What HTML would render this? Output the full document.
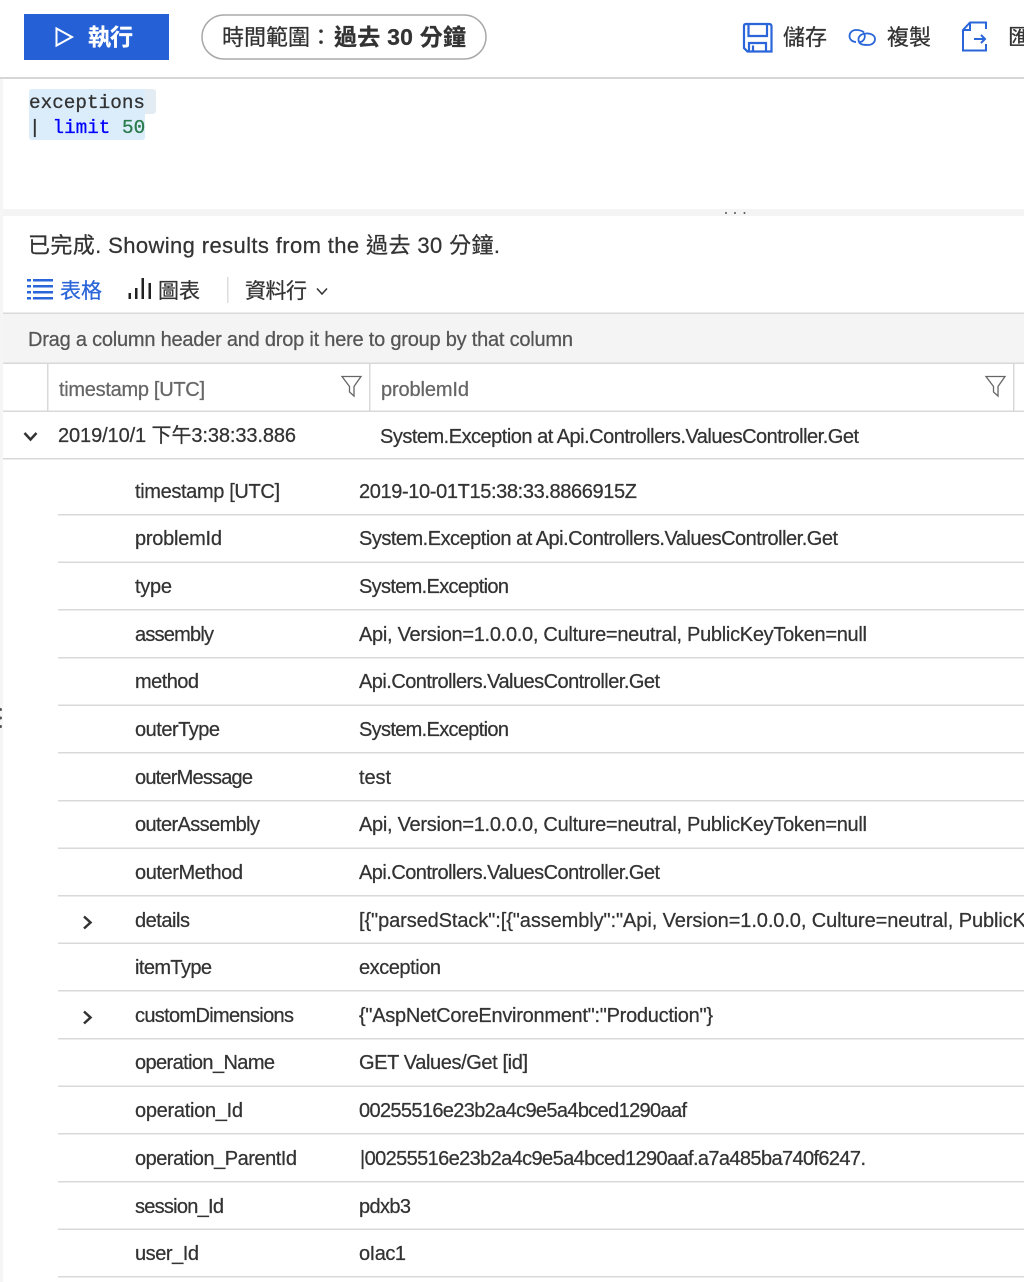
<!DOCTYPE html>
<html><head><meta charset="utf-8"><style>
html,body{margin:0;padding:0;background:#fff;width:1024px;height:1282px;overflow:hidden}
svg{display:block;filter:blur(.3px)}
text{font-family:"Liberation Sans","Noto Sans CJK TC",sans-serif;font-size:20px;fill:#333;stroke:#333;stroke-width:.25px;white-space:pre}
.m{font-family:"Liberation Mono",monospace;font-size:19.3px;stroke-width:.3px}
.l{fill:#d9d9d9}
.big{font-size:22px}
.w{fill:#fff;stroke:#fff;font-size:23px;font-weight:bold}
.bold{font-size:23px;font-weight:bold}
.blue{font-size:21px;fill:#2a66d9;stroke:#2a66d9}
.g5{fill:#555;stroke:#555}
.g6{fill:#666;stroke:#666}
</style></head><body>
<svg width="1024" height="1282" viewBox="0 0 1024 1282" xmlns="http://www.w3.org/2000/svg">
<rect x="0" y="79" width="3" height="1203" fill="#f5f5f5"/>
<!-- top bar -->
<rect x="24" y="14" width="145" height="46" fill="#2660d6"/>
<path d="M56.5 28.5 L72 37 L56.5 45.5 Z" fill="none" stroke="#fff" stroke-width="2"/>
<text class="w" x="88" y="45" textLength="45">執行</text>
<rect x="202" y="15" width="284" height="44" rx="22" fill="#fff" stroke="#aaa" stroke-width="1.5"/>
<text class="big" x="222" y="45" textLength="110">時間範圍：</text>
<text class="bold" x="334" y="45" textLength="132">過去 30 分鐘</text>
<path d="M746 24 H769 Q771.500 24 771.500 26.500 V51.500 H747.500 L744 48 V26 Q744 24 746 24 Z M748.500 24 V36 H767 V24 M749 51.500 V43 H766 V51.500 M753 45.500 V51.500" fill="none" stroke="#2a66d9" stroke-width="2.200"/>
<text class="big" x="783" y="45" textLength="44">儲存</text>
<path d="M864 32.500 C862 30.500 859 30 856 30 C852 30 849.500 33 849.500 36 C849.500 39.500 852.500 42 856 42 M864 33.500 C866 37 864 41.500 860 42 M866 33.500 C871 33 875 35.500 875 39 C875 42.500 872 45 868 45 C864 45 859 45 858.500 40 C858 36 862 33.500 866 33.500" fill="none" stroke="#2a66d9" stroke-width="1.800"/>
<text class="big" x="887" y="45" textLength="44">複製</text>
<path d="M986 29 V22.500 H970 L963 30 V50.500 H986 V44 M970 22.500 V30 H963 M974 39 H985 M981 35 L985 39 L981 43" fill="none" stroke="#2a66d9" stroke-width="2"/>
<text class="big" x="1008" y="45">匯</text>
<rect x="0" y="77" width="1024" height="2" fill="#d6d6d6"/>
<!-- query -->
<path d="M29 92 a3 3 0 0 1 3-3 H153 a3 3 0 0 1 3 3 V111 a3 3 0 0 1-3 3 H29 Z" fill="#e4ecf3"/>
<path d="M29 92 a3 3 0 0 1 3-3 H145 V137 a3 3 0 0 1-3 3 H32 a3 3 0 0 1-3-3 Z" fill="#dbedfb"/>
<text class="m" x="29" y="108" textLength="116">exceptions</text>
<text class="m" x="29" y="133">|</text>
<text class="m" x="52.500" y="133" style="fill:#0000ff;stroke:#0000ff">limit</text>
<text class="m" x="122" y="133" style="fill:#2a7a4b;stroke:#2a7a4b">50</text>
<!-- splitter -->
<rect x="3" y="209" width="1021" height="7" fill="#f4f4f4"/>
<circle cx="726" cy="213" r="1" fill="#555"/><circle cx="735" cy="213" r="1" fill="#555"/><circle cx="744.500" cy="213" r="1" fill="#555"/>
<text class="big" x="28" y="253" textLength="472">已完成. Showing results from the 過去 30 分鐘.</text>
<!-- tabs -->
<g fill="#2a66d9">
<rect x="27" y="279" width="4" height="2.500"/><rect x="33" y="279" width="20" height="2.500"/>
<rect x="27" y="285" width="4" height="2.500"/><rect x="33" y="285" width="20" height="2.500"/>
<rect x="27" y="291" width="4" height="2.500"/><rect x="33" y="291" width="20" height="2.500"/>
<rect x="27" y="297" width="4" height="2.500"/><rect x="33" y="297" width="20" height="2.500"/>
</g>
<text class="blue" x="60" y="298" textLength="42">表格</text>
<g fill="#222">
<rect x="128.500" y="293" width="2.500" height="6"/><rect x="135" y="288" width="2.500" height="11"/><rect x="141.500" y="278" width="2.500" height="21"/><rect x="148.500" y="283" width="2.500" height="16"/>
</g>
<text x="158" y="298" textLength="42" style="font-size:21px">圖表</text>
<rect x="227" y="277" width="1.500" height="26" fill="#ddd"/>
<text x="245" y="298" textLength="62" style="font-size:21px">資料行</text>
<path d="M317 288.500 L322 294 L327 288.500" fill="none" stroke="#333" stroke-width="1.500"/>
<!-- group bar -->
<rect x="3" y="313" width="1021" height="51" fill="#f4f4f4"/>
<rect class="l" x="3" y="312.500" width="1021" height="1.500"/>
<rect class="l" x="3" y="362.500" width="1021" height="1.500"/>
<text class="g5" x="28" y="346" textLength="545">Drag a column header and drop it here to group by that column</text>
<!-- header -->
<rect class="l" x="47" y="364" width="1.500" height="47"/>
<rect class="l" x="369" y="364" width="1.500" height="47"/>
<rect class="l" x="1013" y="364" width="1.500" height="47"/>
<rect class="l" x="3" y="410.500" width="1021" height="1.500"/>
<text class="g6" x="59" y="396" textLength="146">timestamp [UTC]</text>
<text class="g6" x="381" y="396" textLength="88">problemId</text>
<path d="M342 376.500 H361 L354 386.500 V396 L349.500 392 V386.500 Z" fill="none" stroke="#666" stroke-width="1.300"/>
<path d="M986 376.500 H1005 L998 386.500 V396 L993.500 392 V386.500 Z" fill="none" stroke="#666" stroke-width="1.300"/>
<!-- main row -->
<path d="M24.500 433 L30.500 439.500 L36.500 433" fill="none" stroke="#333" stroke-width="2.500"/>
<text x="58" y="442" textLength="238">2019/10/1 下午3:38:33.886</text>
<text x="380" y="443" textLength="479">System.Exception at Api.Controllers.ValuesController.Get</text>
<rect class="l" x="3" y="458" width="1021" height="1.500"/>
<!-- detail rows -->
<g class="rows">
<text x="135" y="498" textLength="145">timestamp [UTC]</text><text x="359" y="498" textLength="278">2019-10-01T15:38:33.8866915Z</text>
<text x="135" y="545" textLength="87">problemId</text><text x="359" y="545" textLength="479">System.Exception at Api.Controllers.ValuesController.Get</text>
<text x="135" y="593" textLength="37">type</text><text x="359" y="593" textLength="150">System.Exception</text>
<text x="135" y="641" textLength="79">assembly</text><text x="359" y="641" textLength="508">Api, Version=1.0.0.0, Culture=neutral, PublicKeyToken=null</text>
<text x="135" y="688" textLength="64">method</text><text x="359" y="688" textLength="301">Api.Controllers.ValuesController.Get</text>
<text x="135" y="736" textLength="85">outerType</text><text x="359" y="736" textLength="150">System.Exception</text>
<text x="135" y="784" textLength="118">outerMessage</text><text x="359" y="784" textLength="32">test</text>
<text x="135" y="831" textLength="125">outerAssembly</text><text x="359" y="831" textLength="508">Api, Version=1.0.0.0, Culture=neutral, PublicKeyToken=null</text>
<text x="135" y="879" textLength="108">outerMethod</text><text x="359" y="879" textLength="301">Api.Controllers.ValuesController.Get</text>
<text x="135" y="927" textLength="55">details</text><text x="359" y="927" textLength="678">[{"parsedStack":[{"assembly":"Api, Version=1.0.0.0, Culture=neutral, PublicKe</text>
<text x="135" y="974" textLength="77">itemType</text><text x="359" y="974" textLength="82">exception</text>
<text x="135" y="1022" textLength="159">customDimensions</text><text x="359" y="1022" textLength="354">{"AspNetCoreEnvironment":"Production"}</text>
<text x="135" y="1069" textLength="140">operation_Name</text><text x="359" y="1069" textLength="169">GET Values/Get [id]</text>
<text x="135" y="1117" textLength="108">operation_Id</text><text x="359" y="1117" textLength="328">00255516e23b2a4c9e5a4bced1290aaf</text>
<text x="135" y="1165" textLength="162">operation_ParentId</text><text x="360" y="1165" textLength="506">|00255516e23b2a4c9e5a4bced1290aaf.a7a485ba740f6247.</text>
<text x="135" y="1213" textLength="89">session_Id</text><text x="359" y="1213" textLength="52">pdxb3</text>
<text x="135" y="1260" textLength="64">user_Id</text><text x="359" y="1260" textLength="47">oIac1</text>
</g>
<g class="l">
<rect x="58" y="514" width="966" height="1.500"/><rect x="58" y="561.500" width="966" height="1.500"/><rect x="58" y="609" width="966" height="1.500"/><rect x="58" y="657" width="966" height="1.500"/><rect x="58" y="704.500" width="966" height="1.500"/><rect x="58" y="752" width="966" height="1.500"/><rect x="58" y="800" width="966" height="1.500"/><rect x="58" y="847.500" width="966" height="1.500"/><rect x="58" y="895" width="966" height="1.500"/><rect x="58" y="942.500" width="966" height="1.500"/><rect x="58" y="990" width="966" height="1.500"/><rect x="58" y="1038" width="966" height="1.500"/><rect x="58" y="1085.500" width="966" height="1.500"/><rect x="58" y="1133" width="966" height="1.500"/><rect x="58" y="1181" width="966" height="1.500"/><rect x="58" y="1228.500" width="966" height="1.500"/><rect x="58" y="1276" width="966" height="1.500"/>
</g>
<path d="M84 916.500 L90.500 922.500 L84 928.500" fill="none" stroke="#333" stroke-width="2.500"/>
<path d="M84 1011.500 L90.500 1017.500 L84 1023.500" fill="none" stroke="#333" stroke-width="2.500"/>
<circle cx="0.500" cy="709.500" r="1.500" fill="#555"/><circle cx="0.500" cy="718" r="1.500" fill="#555"/><circle cx="0.500" cy="726.500" r="1.500" fill="#555"/>
</svg>
</body></html>
